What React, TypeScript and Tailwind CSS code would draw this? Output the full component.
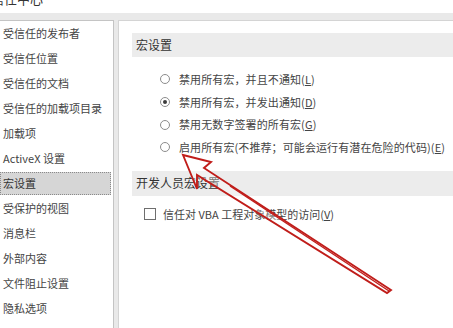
import React from 'react';

const sideItems = [
  '受信任的发布者',
  '受信任位置',
  '受信任的文档',
  '受信任的加载项目录',
  '加载项',
  'ActiveX 设置',
  '宏设置',
  '受保护的视图',
  '消息栏',
  '外部内容',
  '文件阻止设置',
  '隐私选项',
];

const macroOptions = [
  { label: '禁用所有宏，并且不通知', key: 'L', checked: false },
  { label: '禁用所有宏，并发出通知', key: 'D', checked: true },
  { label: '禁用无数字签署的所有宏', key: 'G', checked: false },
  { label: '启用所有宏(不推荐；可能会运行有潜在危险的代码)', key: 'E', checked: false },
];

function Radio({ checked }: { checked: boolean }) {
  return (
    <span className="flex h-[10px] w-[10px] items-center justify-center rounded-full border border-[#8c8c8c] bg-white">
      {checked && <span className="h-[4px] w-[4px] rounded-full bg-[#3c3c3c]" />}
    </span>
  );
}

export default function App() {
  return (
    <div
      className="relative h-[328px] w-[453px] overflow-hidden bg-white text-[#444]"
      style={{ fontFamily: '"Noto Sans CJK SC", "Noto Sans", sans-serif' }}
    >
      <div className="h-[13px] overflow-hidden bg-white">
        <div className="-ml-[9px] -mt-[10px] text-[13px] leading-[18px] text-[#333]">信任中心</div>
      </div>
      <div className="flex h-[315px] bg-[#e9e9e9] pt-[7px]">
        {/* sidebar */}
        <div className="w-[114px] border-r border-t border-[#c4c4c4] bg-white">
          {sideItems.map((item) =>
            item === '宏设置' ? (
              <div
                key={item}
                className="my-[1px] mr-[2px] flex h-[23px] items-center border border-dotted border-[#8a8a8a] bg-[#d6d6d6] pl-[2px] text-[11px] text-[#333]"
              >
                {item}
              </div>
            ) : (
              <div key={item} className="flex h-[25px] items-center pl-[3px] text-[11px]">
                {item}
              </div>
            )
          )}
        </div>
        {/* content */}
        <div className="ml-[4px] flex-1 border-l border-t border-[#d4d4d4] bg-white pl-[13px] pt-[12px]">
          <div className="flex h-[24px] items-center bg-[#ececec] pl-[4px] text-[12px] text-[#333]">宏设置</div>
          <div className="mt-[11px] pl-[28px]">
            {macroOptions.map((o) => (
              <div key={o.key} className="flex h-[22.7px] items-center gap-[9px] text-[11px] tracking-[0.1px]">
                <Radio checked={o.checked} />
                <span className="whitespace-nowrap">
                  {o.label}(<span className="underline">{o.key}</span>)
                </span>
              </div>
            ))}
          </div>
          <div className="mt-[12px] flex h-[25px] items-center bg-[#ececec] pl-[4px] text-[12px] text-[#333]">
            开发人员宏设置
          </div>
          <div className="mt-[7px] flex h-[23px] items-center gap-[7px] pl-[12px] text-[11px]">
            <span className="h-[12px] w-[12px] border border-[#6e6e6e] bg-white" />
            <span className="whitespace-nowrap">
              信任对 VBA 工程对象模型的访问(<span className="underline">V</span>)
            </span>
          </div>
        </div>
      </div>
      {/* red annotation arrow */}
      <svg className="pointer-events-none absolute left-0 top-0" width="453" height="328" viewBox="0 0 453 328">
        <polygon
          points="183,155 211,162 204,168 391,290 387,293 197,175 197,189"
          fill="white"
          fillOpacity="0.35"
          stroke="#c01d1a"
          strokeWidth="1.9"
          strokeLinejoin="miter"
        />
        <line x1="230" y1="186" x2="389" y2="291" stroke="#c01d1a" strokeWidth="1.4" />
      </svg>
    </div>
  );
}
